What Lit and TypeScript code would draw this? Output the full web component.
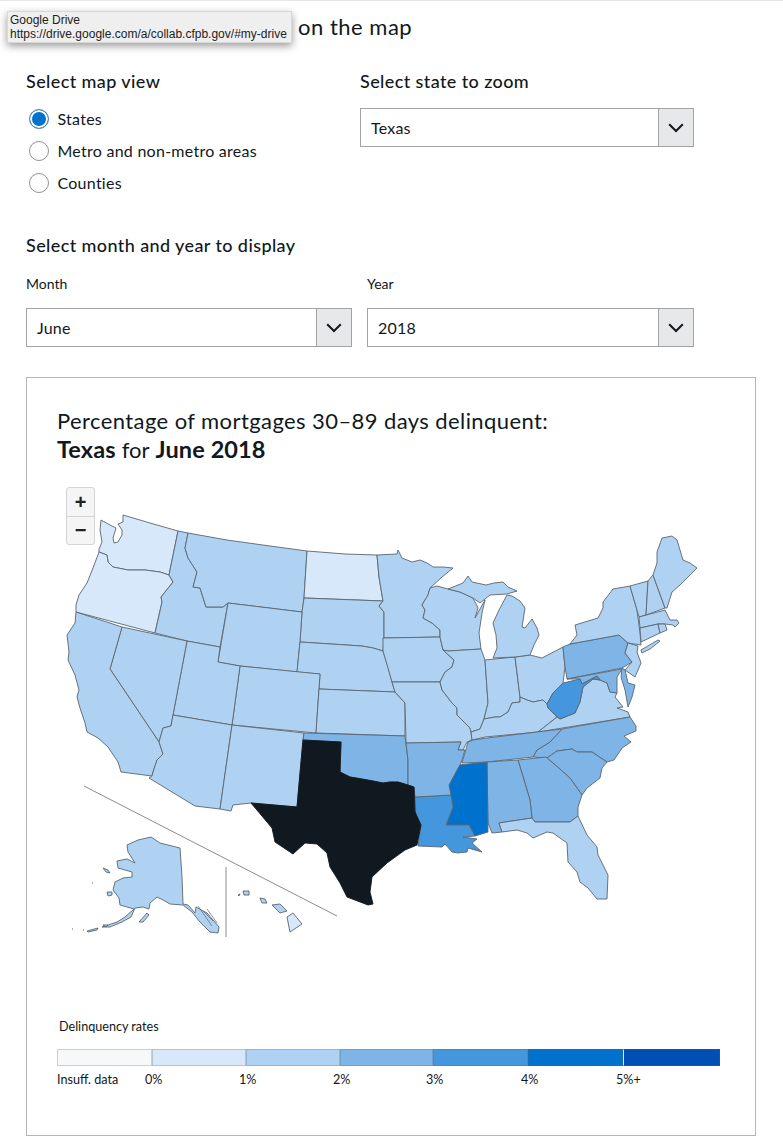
import { LitElement, html, css, svg } from "lit";
import { customElement } from "lit/decorators.js";

const C = ["#f7f8f9", "#d6e8fa", "#afd2f2", "#7fb5e6", "#4497dc", "#0072ce", "#0050b4", "#101820"];

const STATES: [string, number, string][] = [
  ["WA", 1, "123,515 150,523 178,531 169,575 160,572 145,570 128,570 113,567 108,562 107,555 99,552 99,549 102,542 100,530 101,520 110,525 116,528 113,538 114,543 118,542 122,535 122,530 118,524 123,522"],
  ["OR", 1, "99,552 107,555 108,562 113,567 128,570 145,570 160,572 169,575 173,582 161,597 162,602 155,633 76,612 76,605 79,595 87,583 93,568 96,560"],
  ["ID", 2, "178,531 188,533 185,548 188,558 197,572 193,587 200,588 206,607 214,607 223,607 228,603 220,647 187,641 155,633 162,602 161,597 173,582 169,575"],
  ["MT", 2, "188,533 227,540 270,546 307,551 304,598 302,612 228,603 223,607 214,607 206,607 200,588 193,587 197,572 188,558 185,548"],
  ["ND", 1, "307,551 345,554 377,555 379,577 383,601 304,598"],
  ["SD", 2, "304,598 383,601 379,606 384,612 384,638 383,651 373,648 362,646 300,642 302,612"],
  ["WY", 2, "228,603 302,612 300,642 297,672 240,666 218,662"],
  ["NE", 2, "300,642 362,646 373,648 383,651 388,667 392,682 395,692 319,689 320,674 297,672"],
  ["CO", 2, "240,666 320,674 316,733 232,725"],
  ["UT", 2, "187,641 220,647 218,662 240,666 232,725 173,715"],
  ["NV", 2, "122,627 187,641 173,715 171,726 163,728 159,742 110,669"],
  ["CA", 2, "76,612 122,627 110,669 159,742 163,754 157,760 153,772 152,776 121,772 118,762 108,747 98,738 87,732 85,723 80,708 77,697 79,690 75,675 68,660 69,652 67,635 75,623"],
  ["AZ", 2, "173,715 232,725 220,809 195,806 149,778 152,776 153,772 157,760 163,754 159,742 163,728 171,726"],
  ["NM", 2, "232,725 304,733 303,740 297,807 251,803 233,805 231,811 220,809"],
  ["KS", 2, "319,689 395,692 405,703 405,736 316,733"],
  ["OK", 3, "304,733 405,736 408,760 408,785 398,782 390,782 383,783 373,781 362,779 350,777 340,772 341,742 303,740"],
  ["MN", 2, "377,555 397,554 398,550 402,558 412,562 420,560 427,563 433,567 443,567 453,568 442,577 430,588 428,595 422,605 425,610 423,618 432,623 440,630 440,637 384,638 384,612 379,606 383,601 379,577"],
  ["IA", 2, "383,638 440,637 443,650 454,660 452,667 445,672 440,682 392,682 388,668 383,651"],
  ["MO", 2, "392,682 440,682 442,690 452,703 457,708 457,715 470,728 471,732 472,740 467,742 463,750 458,750 461,742 406,743 405,703 395,692"],
  ["WI", 2, "430,588 437,586 448,589 460,592 473,598 478,608 475,618 485,600 482,613 479,633 481,649 448,651 443,650 440,637 440,630 432,623 423,618 425,610 422,605 428,595"],
  ["IL", 2, "448,651 481,649 485,660 488,703 484,719 480,729 471,732 470,728 457,715 457,708 452,703 442,690 440,682 445,672 452,667 454,660 443,650"],
  ["IN", 2, "485,660 515,657 520,697 520,702 512,703 508,712 500,717 495,717 484,719 488,703"],
  ["OH", 2, "515,657 530,655 542,658 563,647 565,667 563,683 553,693 547,704 543,700 533,702 527,700 520,697"],
  ["MIL", 2, "493,658 497,648 496,635 493,623 499,610 507,595 512,596 520,601 525,608 522,627 525,628 532,619 537,628 539,635 534,645 530,655 515,657"],
  ["MIU", 2, "448,589 463,583 468,576 472,582 486,585 494,583 503,582 508,587 517,591 507,594 490,595 480,603 473,598 460,592"],
  ["KY", 2, "472,740 485,737 538,732 557,717 548,708 547,704 543,700 533,702 527,700 520,697 520,702 512,703 508,712 500,717 495,717 484,719 480,729 471,732"],
  ["VA", 2, "538,732 630,717 628,712 617,708 623,707 615,697 617,693 610,692 607,683 600,680 593,679 583,687 580,702 575,713 560,719 557,717"],
  ["PA", 3, "563,647 570,644 619,635 628,643 625,653 632,662 622,668 567,679 565,667"],
  ["NY", 2, "570,644 577,635 575,625 598,618 603,608 603,602 613,589 630,586 637,610 640,633 641,645 628,643 619,635"],
  ["LI", 2, "641,650 658,640 660,641 650,649 642,653"],
  ["NJ", 2, "628,643 638,646 637,652 641,663 635,677 625,670 632,662 625,653"],
  ["MD", 3, "567,679 622,669 617,677 617,693 610,692 607,683 600,680 597,676 582,684 580,679"],
  ["DE", 3, "622,668 625,670 628,683 635,685 632,697 628,707 625,690 621,677"],
  ["WV", 4, "563,683 580,679 582,684 597,676 600,680 593,679 583,687 580,702 575,713 560,719 548,708 547,704 553,693"],
  ["VT", 2, "630,586 648,581 646,615 639,617 637,610"],
  ["NH", 2, "648,581 653,575 665,608 646,615"],
  ["ME", 2, "653,575 657,563 657,552 662,538 672,536 677,540 683,560 690,563 697,568 687,578 680,585 672,592 667,608 665,608"],
  ["MA", 2, "639,617 665,610 670,620 677,620 679,623 675,627 673,625 665,624 658,624 640,628"],
  ["CT", 2, "640,628 658,624 660,633 641,642"],
  ["RI", 2, "658,624 665,624 667,630 660,633"],
  ["NC", 3, "562,729 630,717 636,726 636,731 624,736 631,742 622,748 614,760 607,762 592,752 577,752 572,749 557,751 547,758 533,757 537,750 550,742"],
  ["TN", 3, "462,763 468,742 473,740 487,738 562,729 550,742 537,750 533,757 487,762"],
  ["SC", 3, "547,758 557,751 572,749 577,752 592,752 607,762 602,768 600,778 587,788 582,795 570,778 553,763"],
  ["GA", 3, "518,760 546,757 553,763 570,778 582,795 578,807 578,816 570,822 535,822 532,818 530,800"],
  ["AL", 3, "487,762 518,760 530,800 532,818 499,823 502,832 492,833 488,823"],
  ["FL", 2, "499,823 532,818 535,822 570,822 578,816 587,835 597,847 598,855 608,875 607,899 597,899 588,888 580,882 577,872 568,862 567,843 553,833 547,832 533,838 527,833 517,830 502,832"],
  ["MS", 5, "458,765 487,762 488,832 475,836 469,825 446,825 453,807 449,785 457,770"],
  ["LA", 4, "415,797 451,795 453,807 446,825 469,825 475,836 463,837 477,839 472,843 482,852 468,848 467,852 458,853 452,852 445,844 442,847 418,846 421,825 415,812"],
  ["AR", 3, "406,743 461,742 458,750 465,750 461,763 457,770 449,785 451,795 415,797 414,787 408,785 408,760"],
  ["TX", 7, "303,740 341,742 340,772 350,777 362,779 373,781 383,783 390,782 398,782 408,785 414,787 415,812 421,825 417,845 405,850 387,863 372,877 370,892 373,904 368,905 347,897 340,883 330,867 327,853 317,844 305,843 293,854 275,842 272,828 251,803 297,807"],
  ["AK", 2, "151,837 160,843 180,848 182,877 183,904 188,905 195,913 196,907 207,913 219,927 218,933 210,932 200,922 192,912 183,905 170,904 163,900 157,897 150,903 149,909 143,907 135,908 131,917 122,922 110,927 102,927 117,922 125,917 134,909 127,907 120,905 119,898 113,890 115,882 123,878 132,877 132,872 118,868 117,861 127,859 135,863 128,852 127,845 138,840"],
  ["AK2", 2, "103,868 108,870 110,873 106,872"],
  ["AK3", 2, "107,892 112,892 112,895 108,896"],
  ["AK4", 2, "139,922 147,913 149,915 143,922"],
  ["AK5", 2, "87,931 98,928 97,930 88,932"],
  ["AK6", 2, "103,925 108,925 106,927"],
  ["HI1", 1, "287,917 293,913 302,924 290,932"],
  ["HI2", 2, "272,905 280,904 287,911 280,913 276,909"],
  ["HI3", 2, "260,898 265,899 267,903 262,903"],
  ["HI4", 2, "243,891 249,891 249,895 244,895"],
  ["HI5", 2, "238,895 240,894 239,896"],
];

const LEGEND: [string, string][] = [
  [C[0], "Insuff. data"], [C[1], "0%"], [C[2], "1%"], [C[3], "2%"], [C[4], "3%"], [C[5], "4%"], [C[6], "5%+"],
];

const chevron = html`<svg width="16" height="10" viewBox="0 0 16 10"><path d="M1.2 1.2 8 8l6.8-6.8" fill="none" stroke="#101820" stroke-width="2"/></svg>`;

@customElement("app-root")
export class AppRoot extends LitElement {
  static styles = css`
    :host { display: block; position: relative; font-family: Lato, "Open Sans", sans-serif; color: #101820; background: #fff; height: 1143px; overflow: hidden; border-top: 1px solid #e6e6e6; box-sizing: border-box; }
    .page { display: flex; flex-direction: column; padding: 12px 27px 0 26px; }
    h1 { margin: 0 0 0 -10px; font-size: 22px; line-height: 27px; font-weight: 400; white-space: nowrap; letter-spacing: 0.5px; }
    .tip { position: absolute; left: 7px; top: 10px; width: 285px; height: 32px; box-sizing: border-box; padding: 1px 2px; background: #efefef; box-shadow: 0 3px 8px rgba(0,0,0,.4); font: 12px/14px "Liberation Sans", Arial, sans-serif; white-space: nowrap; z-index: 5; border: 1px solid #d8d8d8; color: #222; }
    .top { display: grid; grid-template-columns: 334px 334px; gap: 0; margin-top: 29px; }
    .h { font-size: 18px; line-height: 24px; font-weight: 500; letter-spacing: .4px; margin: 0; }
    .radios { display: flex; flex-direction: column; gap: 8px; margin-top: 14px; padding-left: 3px; }
    .radio { display: flex; align-items: center; gap: 8.5px; font-size: 16px; line-height: 24px; letter-spacing: .26px; }
    .dot { width: 20px; height: 20px; box-sizing: border-box; border-radius: 50%; border: 1px solid #8f9396; background: #fff; flex: none; margin-top: -1px; }
    .dot.on { border-color: #5b87b3; background: #0072ce; box-shadow: inset 0 0 0 2px #fff; }
    .sel { display: flex; height: 39px; box-sizing: border-box; border: 1px solid #a2a3a4; align-items: stretch; font-size: 16px; letter-spacing: .2px; background: #fff; }
    .sel .v { flex: 1; display: flex; align-items: center; padding-left: 10px; }
    .sel .b { width: 34px; background: #e7e8e9; border-left: 1px solid #a2a3a4; display: flex; align-items: center; justify-content: center; }
    .zoomstate { margin-top: 15px; width: 334px; }
    .mh { margin-top: 38px; }
    .dates { display: grid; grid-template-columns: 326px 327px; gap: 15px; margin-top: 18px; }
    .lab { font-size: 14px; line-height: 18px; margin-bottom: 15px; }
    .card { margin-top: 30px; width: 730px; height: 759px; box-sizing: border-box; border: 1px solid #b4b5b6; display: flex; flex-direction: column; position: relative; flex: none; }
    .title { padding: 29px 0 0 30px; font-size: 22px; line-height: 28px; letter-spacing: .41px; }
    .title b { font-size: 23.5px; font-weight: 700; letter-spacing: .1px; }
    .title .f { letter-spacing: 0; }
    .map { position: relative; margin-top: 16px; height: 530px; }
    .map svg { display: block; }
    .zoom { position: absolute; left: 39px; top: 7px; width: 29px; border: 1px solid #d4d4d4; border-radius: 3px; background: #f5f5f5; display: flex; flex-direction: column; box-sizing: border-box; }
    .zoom div { height: 27.5px; display: flex; align-items: center; justify-content: center; font: 700 20px/1 "Liberation Sans", sans-serif; color: #222; }
    .zoom div + div { border-top: 1px solid #d4d4d4; }
    .legend { padding: 9px 35px 0 30px; }
    .lt { font-size: 12.6px; line-height: 16px; padding-left: 2px; }
    .bar, .ticks { display: grid; grid-template-columns: 95px 94px 94px 93px 95px 95px 97px; }
    .bar { margin-top: 14px; height: 17px; }
    .seg { border: 1px solid rgba(90,101,112,.28); box-sizing: border-box; }
    .seg:last-child { border-left-color: #d6e8fa; }
    .ticks { margin-top: 6px; font-size: 12.6px; line-height: 16px; }
    .ticks span + span { margin-left: -7px; }
  `;

  private select(v: string) {
    return html`<div class="sel"><div class="v">${v}</div><div class="b">${chevron}</div></div>`;
  }

  render() {
    return html`
      <div class="tip">Google Drive<br />https://drive.google.com/a/collab.cfpb.gov/#my-drive</div>
      <div class="page">
        <h1>Mortgage delinquency data on the map</h1>
        <div class="top">
          <div>
            <p class="h">Select map view</p>
            <div class="radios">
              <div class="radio"><span class="dot on"></span>States</div>
              <div class="radio"><span class="dot"></span>Metro and non-metro areas</div>
              <div class="radio"><span class="dot"></span>Counties</div>
            </div>
          </div>
          <div>
            <p class="h">Select state to zoom</p>
            <div class="zoomstate">${this.select("Texas")}</div>
          </div>
        </div>
        <p class="h mh">Select month and year to display</p>
        <div class="dates">
          <div><div class="lab">Month</div>${this.select("June")}</div>
          <div><div class="lab">Year</div>${this.select("2018")}</div>
        </div>
        <div class="card">
          <div class="title">Percentage of mortgages 30–89 days delinquent:<br /><b>Texas</b> <span class="f">for</span> <b>June 2018</b></div>
          <div class="map">
            <svg width="728" height="530" viewBox="27 480 728 530">
              ${STATES.map(([id, l, p]) => svg`<polygon data-id=${id} points=${p} fill=${C[l]} stroke=${l === 7 ? "#101820" : "#5a6570"} stroke-width="0.9" stroke-linejoin="round"></polygon>`)}
              <path d="M84 786 337 916M226 867V937" fill="none" stroke="#8a8d90" stroke-width="1"/>
              <path d="M72 929h1M83 930h1M92 883h1" stroke="#5a6570" stroke-width="1"/>
              <path d="M203 911l10 10M207 909l10 14M198 906l14 20" stroke="#5a6570" stroke-width=".7" fill="none"/>
            </svg>
            <div class="zoom"><div>+</div><div>−</div></div>
          </div>
          <div class="legend">
            <div class="lt">Delinquency rates</div>
            <div class="bar">${LEGEND.map(([c]) => html`<div class="seg" style="background:${c}"></div>`)}</div>
            <div class="ticks">${LEGEND.map(([, t]) => html`<span>${t}</span>`)}</div>
          </div>
        </div>
      </div>
    `;
  }
}
